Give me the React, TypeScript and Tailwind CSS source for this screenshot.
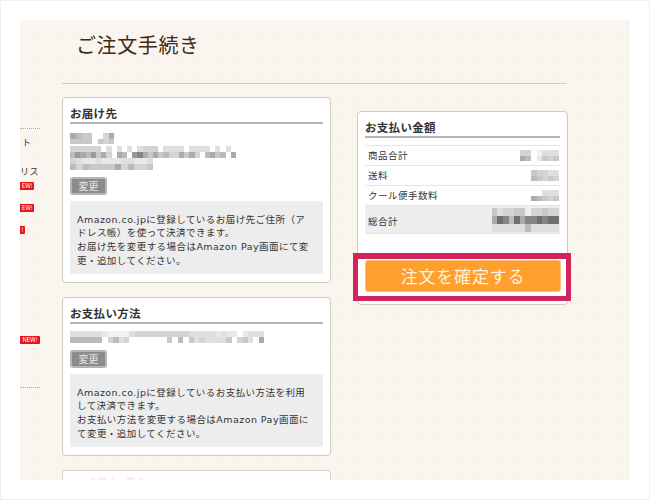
const font = "font-['Hiragino_Sans','Noto_Sans_CJK_JP','Noto_Sans_CJK_SC',sans-serif]";

const LEVELS: Record<string, string> = {
  "0": "#6f6f6f", "1": "#858585", "2": "#9a9a9a", "3": "#ababab", "4": "#bbbbbb",
  "5": "#c8c8c8", "6": "#d4d4d4", "7": "#dfdfdf", "8": "#e8e8e8", "9": "#f2f2f2", ".": "transparent",
};

function Mosaic({ rows, cell = 5.5, h = 6.5 }: { rows: string[]; cell?: number; h?: number }) {
  return (
    <div className="flex flex-col blur-[0.7px]">
      {rows.map((row, r) => (
        <div key={r} className="flex">
          {row.split("").map((c, i) => (
            <div key={i} style={{ width: cell, height: h, background: LEVELS[c] }} />
          ))}
        </div>
      ))}
    </div>
  );
}

function Card({ title, children, className }: { title: string; children: React.ReactNode; className: string }) {
  return (
    <section className={`rounded-[4px] border border-[#cfcac2] bg-white px-[7px] ${className}`}>
      <h2 className="border-b-2 border-[#b4b4b4] pt-[7px] pb-0 text-[11.5px] leading-[17px] font-bold tracking-[0.3px] text-[#333]">
        {title}
      </h2>
      {children}
    </section>
  );
}

function ChangeButton() {
  return (
    <button className="block h-[18px] w-[37px] rounded-[3px] border-2 border-[#b5b5b5] bg-[#8c8c8c] text-center text-[10px] leading-[14px] text-[#e6e6e6]">
      変更
    </button>
  );
}

function Note({ lines }: { lines: string[] }) {
  return (
    <div className="bg-[#ededed] px-[7px] pt-[11.5px] pb-[6.5px] font-['DejaVu_Sans','Noto_Sans_CJK_JP',sans-serif] text-[9.5px] leading-[13.7px] tracking-[0.45px] text-[#333]">
      {lines.map((l) => (
        <div key={l} className="whitespace-nowrap">{l}</div>
      ))}
    </div>
  );
}

function Badge({ label, w, mt }: { label: string; w: string; mt: string }) {
  return (
    <div className={`h-[8px] rounded-r-[1px] bg-[#e8141c] text-[6px] leading-[8px] text-white overflow-hidden whitespace-nowrap text-center ${w} ${mt}`}>
      {label}
    </div>
  );
}

function PriceRow({ label, rows, tall }: { label: string; rows: string[]; tall?: boolean }) {
  return (
    <div className={`flex items-center justify-between border-b border-[#e4e4e4] pr-[1px] pl-[3px] text-[9.5px] tracking-[0.5px] text-[#333] ${tall ? "h-[28px] bg-[#eeeeee]" : "h-[20px]"}`}>
      <span className={tall ? "pt-[3px]" : ""}>{label}</span>
      <Mosaic rows={rows} cell={5.6} h={tall ? 8 : 5.5} />
    </div>
  );
}

export default function App() {
  return (
    <div className={`h-[500px] w-[650px] overflow-hidden border border-[#f0f0f0] bg-white p-[19px] ${font}`}>
      <div className="relative flex h-[460px] overflow-hidden bg-[#faf6ef] bg-[radial-gradient(#f7f2e9_1px,transparent_1px)] bg-[length:5px_5px]">
        {/* clipped sidebar */}
        <aside className="flex w-[42px] shrink-0 flex-col">
          <div className="mt-[108px] w-[20px] border-t border-dotted border-[#aaa]" />
          <div className="mt-[8px] pl-[2px] text-[9px] leading-[12px] text-[#333]">ト</div>
          <div className="mt-[17px] text-[9px] leading-[12px] tracking-[0.5px] text-[#333]">リス</div>
          <Badge label="EW!" w="w-[14px]" mt="mt-[4px]" />
          <Badge label="EW!" w="w-[14px]" mt="mt-[14px]" />
          <Badge label="!" w="w-[5px]" mt="mt-[14px]" />
          <Badge label="NEW!" w="w-[20px]" mt="mt-[102px]" />
          <div className="mt-[43px] w-[20px] border-t border-dotted border-[#aaa]" />
        </aside>

        <main className="w-[504px] shrink-0">
          <h1 className="mt-[11px] ml-[14px] h-[27px] text-[20px] leading-[27px] tracking-[0.6px] text-[#3f2a14]">ご注文手続き</h1>
          <div className="mt-[25px] border-t border-[#cfcbc3]" />

          <div className="mt-[13px] flex items-start gap-[26px]">
            <div className="flex w-[269px] shrink-0 flex-col">
              <Card title="お届け先" className="h-[186px]">
                <div className="mt-[9px]">
                  <Mosaic rows={["3455..63", "5555.565"]} cell={5.5} h={5.5} />
                  <div className="mt-[2px]">
                    <Mosaic
                      rows={["666666.7.7.7.7666.7777.7777.7.7", "42342536.34.2135354663536.4354.3"]}
                      cell={5.2}
                      h={6}
                    />
                  </div>
                  <Mosaic rows={["6788788877887..", "4645555364665"]} cell={6.4} h={6} />
                </div>
                <div className="mt-[7px]"><ChangeButton /></div>
                <div className="mt-[6px]">
                  <Note
                    lines={[
                      "Amazon.co.jpに登録しているお届け先ご住所（ア",
                      "ドレス帳）を使って決済できます。",
                      "お届け先を変更する場合はAmazon Pay画面にて変",
                      "更・追加してください。",
                    ]}
                  />
                </div>
              </Card>

              <Card title="お支払い方法" className="mt-[14px] h-[159px]">
                <div className="mt-[7px]">
                  <Mosaic
                    rows={["7777778999976666666666777778788.8777", "444444.6476.......5.4.57677775.657.3"]}
                    cell={5.4}
                    h={6}
                  />
                </div>
                <div className="mt-[7px]"><ChangeButton /></div>
                <div className="mt-[6px]">
                  <Note
                    lines={[
                      "Amazon.co.jpに登録しているお支払い方法を利用",
                      "して決済できます。",
                      "お支払い方法を変更する場合はAmazon Pay画面に",
                      "て変更・追加してください。",
                    ]}
                  />
                </div>
              </Card>

              <section className="mt-[14px] h-[40px] rounded-t-[4px] border border-b-0 border-[#d8d4cc] bg-white pt-[6px] pl-[20px]">
                <Mosaic rows={["..9.99.9...99.9"]} cell={4} h={4} />
              </section>
            </div>

            <section className="mt-[14px] h-[194px] w-[211px] shrink-0 rounded-[4px] border border-[#cfcac2] bg-white px-[7px]">
              <h2 className="border-b-2 border-[#b4b4b4] pt-[7px] pb-0 text-[11.5px] leading-[17px] font-bold tracking-[0.3px] text-[#333]">
                お支払い金額
              </h2>
              <div className="mt-[7px] border-t border-[#e4e4e4]">
                <PriceRow label="商品合計" rows={["66.9777", "34.8565"]} />
                <PriceRow label="送料" rows={["56677", "45656"]} />
                <PriceRow label="クール便手数料" rows={["..777", "34565"]} />
                <PriceRow label="総合計" tall rows={["576655.66566", "301403110100", "777777477777"]} />
              </div>
              <button className="mt-[26px] block h-[32px] w-[196px] rounded-[3px] border border-[#f9c57e] bg-[#ff9f2e] text-center text-[17px] leading-[28px] tracking-[0.8px] text-[#fff3df]">
                注文を確定する
              </button>
            </section>
          </div>
        </main>

        {/* highlight annotation */}
        <div className="absolute top-[233px] left-[333px] h-[48px] w-[218px] border-[5px] border-t-[6px] border-[#d1245c]" />
      </div>
    </div>
  );
}
